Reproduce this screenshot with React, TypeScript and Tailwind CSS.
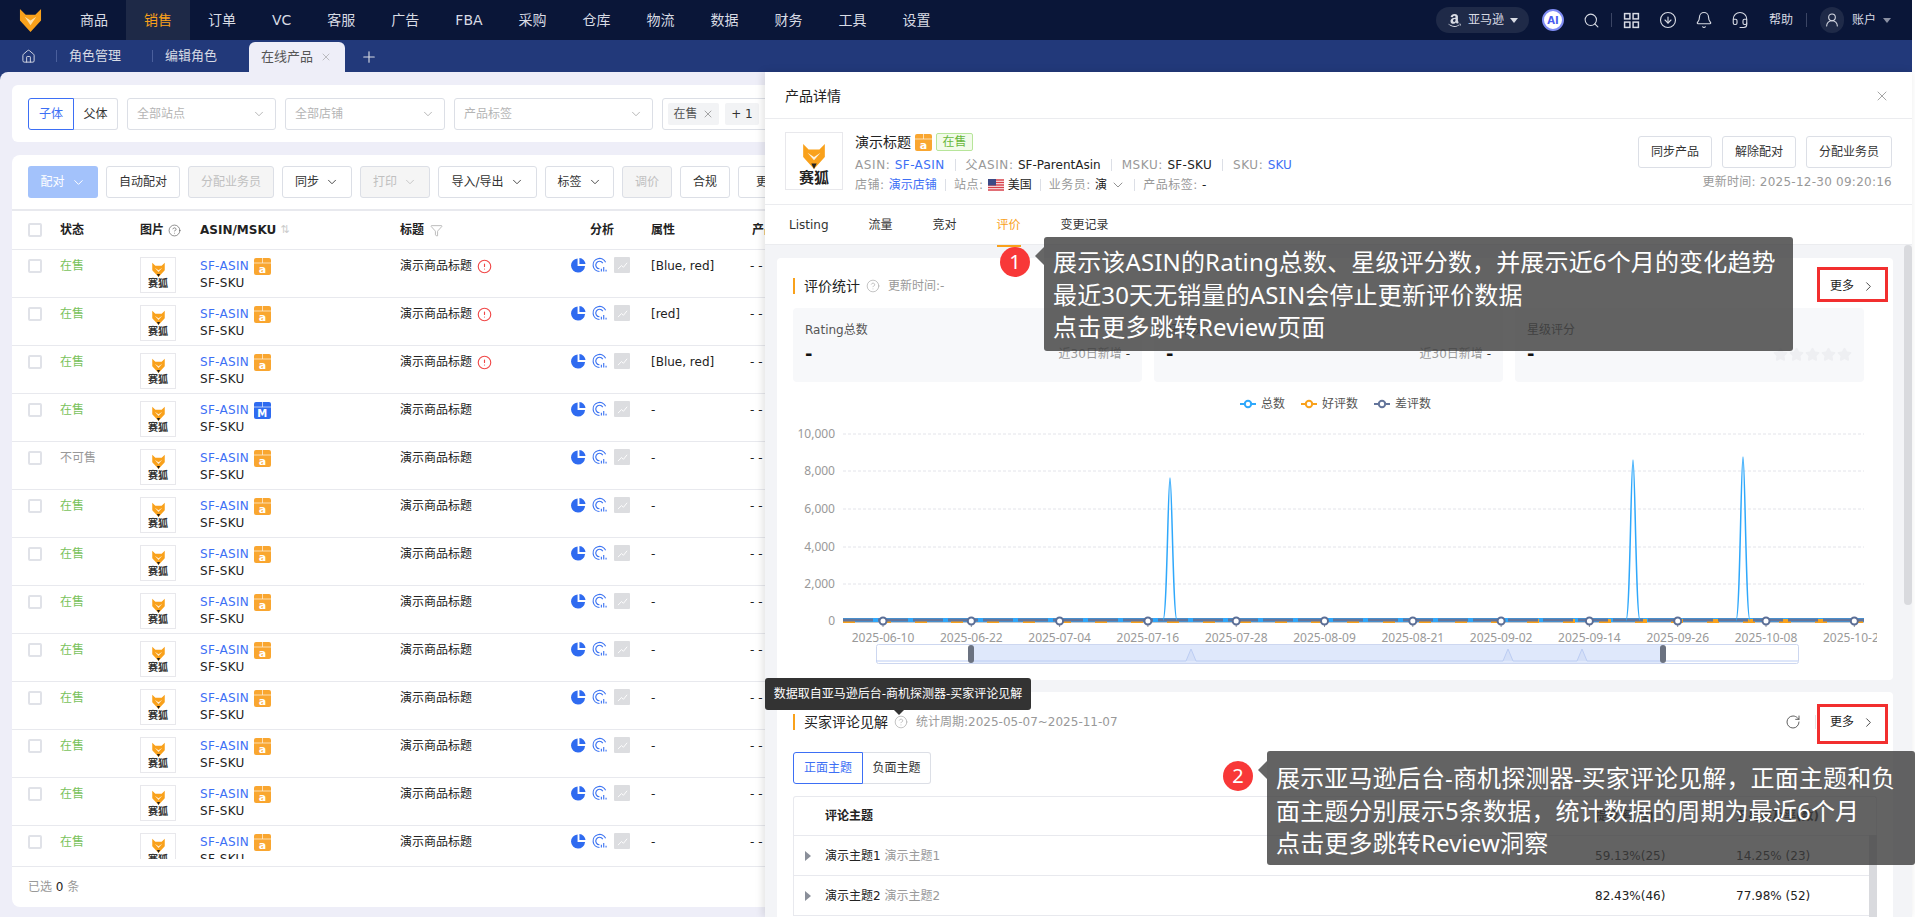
import React from 'react';
import {
  Bell,
  ChevronDown,
  ChevronRight,
  CircleAlert,
  CircleArrowDown,
  CircleHelp,
  Filter,
  Headset,
  House,
  Plus,
  RotateCw,
  Search,
  Star,
  UserRound,
  X,
} from 'lucide-react';
import { FaAmazon } from 'react-icons/fa';

const navItems = ['商品', '销售', '订单', 'VC', '客服', '广告', 'FBA', '采购', '仓库', '物流', '数据', '财务', '工具', '设置'];

const rows = [
  { status: '在售', attr: '[Blue, red]', warn: true, badge: 'a' },
  { status: '在售', attr: '[red]', warn: true, badge: 'a' },
  { status: '在售', attr: '[Blue, red]', warn: true, badge: 'a' },
  { status: '在售', attr: '-', warn: false, badge: 'M' },
  { status: '不可售', attr: '-', warn: false, badge: 'a' },
  ...Array.from({ length: 8 }, () => ({ status: '在售', attr: '-', warn: false, badge: 'a' })),
];

const dates = [
  '2025-06-10', '2025-06-22', '2025-07-04', '2025-07-16', '2025-07-28', '2025-08-09',
  '2025-08-21', '2025-09-02', '2025-09-14', '2025-09-26', '2025-10-08', '2025-10-20',
];

const FoxMark = ({ className }: { className: string }) => (
  <svg viewBox="0 0 24 24" className={className}>
    <path d="M2 1 L7 6 L17 6 L22 1 L22 13 L12 24 L2 13 Z" fill="#f9a11b" />
    <path d="M6 9 L12 13 L18 9 L12 16 Z" fill="#fff" opacity="0.85" />
    <path d="M9.5 19 L14.5 19 L12 24 Z" fill="#222" />
  </svg>
);

const ProductThumb = () => (
  <div className="flex h-[36px] w-[36px] flex-col items-center border border-[#e8e8ec] bg-white pt-[4px]">
    <FoxMark className="h-[15px] w-[17px]" />
    <span className="mt-[1px] text-[10px] leading-[12px] font-bold text-[#333]">赛狐</span>
  </div>
);

// little parcel with the marketplace letter on it
const MarketBadge = ({ type }: { type: string }) => {
  const color = type === 'M' ? '#2f6bf0' : '#f9a630';
  return (
    <svg viewBox="0 0 17 17" className="h-[17px] w-[17px] shrink-0">
      <rect width="17" height="17" rx="2" fill={color} />
      <path d="M0 5 H17 M8.5 0 V5" stroke="#fff" strokeWidth="0.8" opacity="0.8" />
      <text x="8.5" y="14.5" textAnchor="middle" fontSize={type === 'M' ? 10 : 11} fontWeight="700" fill="#fff">
        {type}
      </text>
    </svg>
  );
};

const AnalysisIcons = () => (
  <div className="flex items-start gap-[6px]">
    <svg viewBox="0 0 16 16" className="h-[16px] w-[15px]">
      <path d="M7 1 A7.5 7.5 0 1 0 15 9 L7 9 Z" fill="#2f6bf0" />
      <path d="M9 0.5 A7 7 0 0 1 15.5 7 L9 7 Z" fill="#2f6bf0" />
    </svg>
    <svg viewBox="0 0 16 16" className="h-[16px] w-[15px]" fill="none" stroke="#3d74f2" strokeWidth="1.2">
      <path d="M14.5 5 A7 7 0 1 0 8 15" />
      <path d="M11.5 6 A4 4 0 1 0 8 12" />
      <path d="M10 15 L10 12 M12.5 15 L12.5 10 M15 15 L15 13" />
    </svg>
    <span className="ml-[1px] flex h-[16px] w-[16px] items-center justify-center rounded-[1px] bg-[#dcdde0]">
      <svg viewBox="0 0 12 12" className="h-[11px] w-[11px]" fill="none" stroke="#fff" strokeWidth="1">
        <path d="M1 10 L5 6 L7 8 L11 3" />
      </svg>
    </span>
  </div>
);

const ToolButton = ({ label, w, disabled, caret }: { label: string; w: string; disabled?: boolean; caret?: boolean }) => (
  <button
    className={
      (disabled ? 'bg-[#f5f5f5] text-[#c0c0c0] ' : 'bg-white text-[#333] ') +
      w +
      ' flex h-[32px] shrink-0 items-center justify-center gap-[6px] rounded-[3px] border border-[#dcdfe6] text-[12px]'
    }
  >
    {label}
    {caret && <ChevronDown size={14} strokeWidth={1.5} />}
  </button>
);

const SelectBox = ({ label, w }: { label: string; w: string }) => (
  <div className={w + ' flex h-[32px] shrink-0 items-center justify-between rounded-[3px] border border-[#dcdfe6] bg-white px-[9px] text-[12px] text-[#b5b5b5]'}>
    {label}
    <ChevronDown size={14} strokeWidth={1.2} className="text-[#999]" />
  </div>
);

const Divider = ({ wide }: { wide?: boolean }) => (
  <span className={(wide ? 'mx-[10px] ' : 'mx-[8px] ') + 'h-[12px] w-px bg-[#dcdfe6]'} />
);

const SectionTitle = ({ title }: { title: string }) => (
  <span className="border-l-2 border-[#f9a11b] pl-[9px] text-[14px] leading-[16px] text-[#222]">{title}</span>
);

const MoreLink = () => (
  <span className="flex items-center gap-[7px] text-[12px] text-[#222]">
    更多
    <ChevronRight size={15} strokeWidth={1.3} />
  </span>
);

const StatCard = ({ label, right }: { label: string; right?: boolean }) => (
  <div className="flex h-[74px] flex-col rounded-[4px] bg-[#f7f8fa] px-[12px] pt-[12px]">
    <span className="text-[12px] leading-[20px] text-[#555]">{label}</span>
    <div className="mt-[2px] flex items-center justify-between">
      <span className="text-[18px] leading-[24px] font-bold text-[#111]">-</span>
      {right ? (
        <span className="flex gap-[1px]">
          {[0, 1, 2, 3, 4].map((i) => (
            <Star key={i} size={15} fill="#eeeff2" stroke="#eeeff2" />
          ))}
        </span>
      ) : (
        <span className="text-[12px] text-[#999]">
          近30日新增 <span className="text-[#333]">-</span>
        </span>
      )}
    </div>
  </div>
);

const LegendItem = ({ label, color }: { label: string; color: string }) => (
  <span className="flex items-center gap-[5px] text-[12px] text-[#555]">
    <svg viewBox="0 0 16 10" className="h-[10px] w-[16px]">
      <path d="M0 5 H16" stroke={color} strokeWidth="2" />
      <circle cx="8" cy="5" r="3.2" fill="#fff" stroke={color} strokeWidth="2" />
    </svg>
    {label}
  </span>
);

const ReviewChart = () => {
  const gridLines = [
    { y: 434, label: '10,000' },
    { y: 471, label: '8,000' },
    { y: 509, label: '6,000' },
    { y: 547, label: '4,000' },
    { y: 584, label: '2,000' },
  ];
  return (
    <svg viewBox="777 426 1116 244" className="block h-[244px] w-[1116px] font-['Noto_Sans',sans-serif]">
      <defs>
        <clipPath id="chart-clip">
          <rect x="777" y="426" width="1100" height="244" />
        </clipPath>
      </defs>
      {gridLines.map((g) => (
        <g key={g.y}>
          <line x1="843" x2="1864" y1={g.y} y2={g.y} stroke="#e3e4ea" strokeDasharray="3 2" />
          <text x="835" y={g.y + 4} textAnchor="end" fontSize="12" fill="#999">
            {g.label}
          </text>
        </g>
      ))}
      <text x="835" y="625" textAnchor="end" fontSize="12" fill="#999">
        0
      </text>
      <line x1="843" x2="1864" y1="622" y2="622" stroke="#8a8f99" />
      <g clipPath="url(#chart-clip)">
        {dates.map((d, i) => (
          <g key={d}>
            <line x1={883 + i * 88.3} x2={883 + i * 88.3} y1="622" y2="627" stroke="#8a8f99" />
            <text x={883 + i * 88.3} y="642" textAnchor="middle" fontSize="12" fill="#999">
              {d}
            </text>
          </g>
        ))}
      </g>
      <path d="M843 620 H1864" stroke="#2fa8fb" strokeWidth="4" />
      <path d="M843 621 H1864" stroke="#f9a11b" strokeWidth="4" strokeDasharray="12 24" />
      <path d="M843 620 H1864" stroke="#64759b" strokeWidth="3" strokeDasharray="30 5" />
      <path d="M1163 620 C1167 620 1168 478 1170 478 C1172 478 1173 620 1177 620" fill="none" stroke="#2fa8fb" strokeWidth="1.5" />
      <path d="M1626 620 C1630 620 1631 460 1633 460 C1635 460 1636 620 1640 620" fill="none" stroke="#2fa8fb" strokeWidth="1.5" />
      <path d="M1736 620 C1740 620 1741 457 1743 457 C1745 457 1746 620 1750 620" fill="none" stroke="#2fa8fb" strokeWidth="1.5" />
      {dates.map((d, i) => (
        <circle key={d} cx={883 + i * 88.3} cy="621" r="3.5" fill="#fff" stroke="#5b6e96" strokeWidth="2" />
      ))}
      {/* data zoom */}
      <rect x="876.5" y="644.5" width="922" height="19" rx="2" fill="#fff" stroke="#cdd7f0" />
      <rect x="971" y="645" width="692" height="18" fill="#dfe8fb" />
      <path
        d="M876 661 H1186 L1191 649 L1196 661 H1503 L1508 649 L1513 661 H1577 L1582 649 L1587 661 H1798"
        fill="#d5e0f8"
        stroke="#bccdf3"
      />
      <rect x="968" y="645" width="6" height="18" rx="3" fill="#6b7280" />
      <rect x="1660" y="645" width="6" height="18" rx="3" fill="#6b7280" />
    </svg>
  );
};

const ThemeRow = ({ name, a, b }: { name: string; a: string; b: string }) => (
  <div className="flex h-[40px] items-center border-b border-[#e8e9ee] text-[12px]">
    <span className="mr-[14px] ml-[11px] h-0 w-0 border-y-[5px] border-l-[6px] border-y-transparent border-l-[#8a8f99]" />
    <span className="w-[770px] text-[#222]">
      {name} <span className="text-[#999]">{name}</span>
    </span>
    <span className="w-[141px] text-[#222]">{a}</span>
    <span className="text-[#222]">{b}</span>
  </div>
);

const Callout = ({ n, className, badgeOffset, children }: { n: string; className: string; badgeOffset: string; children: React.ReactNode }) => (
  <div className={"absolute rounded-[3px] bg-[#3c3c3c]/80 px-[9px] font-['Noto_Sans','Noto_Sans_CJK_SC',sans-serif] text-[24px] leading-[32.5px] tracking-[0.15px] whitespace-nowrap text-white " + className}>
    <span className={'absolute -left-[44px] flex h-[30px] w-[30px] items-center justify-center rounded-full bg-[#f83838] text-[20px] ' + badgeOffset}>
      {n}
    </span>
    <span className={'absolute -left-[9px] h-0 w-0 border-y-[9px] border-r-[9px] border-y-transparent border-r-[#666] ' + badgeOffset} />
    {children}
  </div>
);

const TableRow = ({ row }: { row: (typeof rows)[number] }) => (
  <div className="flex h-[48px] shrink-0 items-start border-b border-[#e8e9ee] pt-[7px] pl-[16px] text-[12px] leading-[17px] text-[#222]">
    <span className="mt-[2px] mr-[18px] h-[14px] w-[14px] shrink-0 rounded-[2px] border-2 border-[#e0e2e8] bg-white" />
    <span className={(row.status === '在售' ? 'text-[#7ac25c] ' : 'text-[#999] ') + 'mt-[1px] w-[80px] shrink-0'}>{row.status}</span>
    <span className="w-[60px] shrink-0">
      <ProductThumb />
    </span>
    <div className="mt-[1px] w-[200px] shrink-0 tracking-[0.3px]">
      <div className="flex items-center gap-[5px] text-[#3d6ff5]">
        SF-ASIN
        <MarketBadge type={row.badge} />
      </div>
      <div>SF-SKU</div>
    </div>
    <div className="mt-[1px] flex w-[171px] shrink-0 items-center gap-[5px]">
      演示商品标题
      {row.warn && <CircleAlert size={15} strokeWidth={1.8} className="text-[#f04848]" />}
    </div>
    <span className="w-[80px] shrink-0">
      <AnalysisIcons />
    </span>
    <span className="mt-[1px] w-[99px] shrink-0">{row.attr}</span>
    <span className="mt-[1px]">- -</span>
  </div>
);

const ProductDrawer = () => (
  <div className="absolute top-[72px] bottom-0 left-[765px] flex w-[1147px] flex-col overflow-hidden bg-white shadow-[-2px_0_8px_rgba(0,0,0,0.12)]">
    <div className="flex h-[47px] shrink-0 items-center justify-between border-b border-[#ebecef] pt-[2px] pr-[22px] pl-[20px] text-[14px] text-[#222]">
      产品详情
      <X size={16} strokeWidth={1} className="text-[#777]" />
    </div>

    {/* Product info */}
    <div className="flex h-[86px] shrink-0 border-b border-[#ebecef] pt-[13px] pr-[20px] pl-[20px]">
      <div className="flex h-[58px] w-[58px] shrink-0 flex-col items-center border border-[#e8e8ec] pt-[10px]">
        <FoxMark className="h-[26px] w-[28px]" />
        <span className="text-[15px] leading-[18px] font-bold text-[#222]">赛狐</span>
      </div>
      <div className="ml-[12px] flex-1 text-[12px] text-[#999]">
        <div className="flex h-[20px] items-center gap-[4px] text-[14px] text-[#222]">
          演示标题
          <MarketBadge type="a" />
          <span className="flex h-[18px] w-[37px] items-center justify-center rounded-[2px] border border-[#b7e59a] bg-[#f2fbea] text-[12px] text-[#68b83c]">在售</span>
        </div>
        <div className="mt-[3px] flex h-[20px] items-center tracking-[0.6px]">
          ASIN:&nbsp;<span className="tracking-[0.4px] text-[#3d6ff5]">SF-ASIN</span>
          <Divider wide />
          父ASIN:&nbsp;<span className="tracking-normal text-[#222]">SF-ParentAsin</span>
          <Divider wide />
          MSKU:&nbsp;<span className="tracking-[0.3px] text-[#222]">SF-SKU</span>
          <Divider wide />
          SKU:&nbsp;<span className="tracking-normal text-[#3d6ff5]">SKU</span>
        </div>
        <div className="flex h-[20px] items-center tracking-[0.5px]">
          店铺:&nbsp;<span className="tracking-normal text-[#3d6ff5]">演示店铺</span>
          <Divider />
          站点:&nbsp;
          <svg viewBox="0 0 16 12" className="mr-[4px] h-[12px] w-[16px]">
            <rect width="16" height="12" fill="#fff" />
            <path d="M0 1 H16 M0 3.5 H16 M0 6 H16 M0 8.5 H16 M0 11 H16" stroke="#d8404a" strokeWidth="1.3" />
            <rect width="8" height="6.5" fill="#3c4a86" />
          </svg>
          <span className="tracking-normal text-[#222]">美国</span>
          <Divider />
          业务员:&nbsp;<span className="tracking-normal text-[#222]">演</span>
          <ChevronDown size={16} strokeWidth={1.2} className="ml-[3px] text-[#777]" />
          <Divider />
          产品标签:&nbsp;<span className="tracking-normal text-[#222]">-</span>
        </div>
      </div>
      <div className="flex flex-col items-end">
        <div className="mt-[4px] flex gap-[10px]">
          <ToolButton label="同步产品" w="w-[74px]" />
          <ToolButton label="解除配对" w="w-[74px]" />
          <ToolButton label="分配业务员" w="w-[86px]" />
        </div>
        <span className="mt-[5px] text-[12px] leading-[18px] tracking-[0.25px] text-[#999]">更新时间: 2025-12-30 09:20:16</span>
      </div>
    </div>

    {/* Tabs */}
    <div className="flex h-[40px] shrink-0 items-center gap-[40px] border-b border-[#ebecef] pl-[24px] text-[12px] text-[#333]">
      <span>Listing</span>
      <span>流量</span>
      <span>竞对</span>
      <span className="relative text-[#f9a11b]">
        评价
        <span className="absolute top-[29px] left-0 h-[2px] w-full bg-[#f9a11b]" />
      </span>
      <span>变更记录</span>
    </div>

    <div className="flex flex-1 flex-col gap-[12px] overflow-hidden bg-[#f3f4f7] pt-[13px] pr-[19px] pl-[12px]">
      {/* Rating stats */}
      <div className="shrink-0 rounded-[4px] bg-white pl-[16px]">
        <div className="flex h-[50px] items-center justify-between pt-[6px] pr-[17px]">
          <div className="flex items-center gap-[6px]">
            <SectionTitle title="评价统计" />
            <CircleHelp size={14} strokeWidth={1.2} className="text-[#aaa]" />
            <span className="ml-[2px] text-[12px] text-[#999]">更新时间:-</span>
          </div>
          <MoreLink />
        </div>
        <div className="grid w-[1071px] grid-cols-3 gap-[12px]">
          <StatCard label="Rating总数" />
          <StatCard label="好评数" />
          <StatCard label="星级评分" right />
        </div>
        <div className="flex h-[44px] w-[1071px] items-center justify-center gap-[16px] pl-[14px]">
          <LegendItem label="总数" color="#2fa8fb" />
          <LegendItem label="好评数" color="#f9a11b" />
          <LegendItem label="差评数" color="#64759b" />
        </div>
        <div className="-ml-[16px] pb-[10px]">
          <ReviewChart />
        </div>
      </div>

      {/* Buyer review insights */}
      <div className="flex-1 rounded-t-[4px] bg-white pl-[16px]">
        <div className="flex h-[60px] items-center justify-between pr-[17px]">
          <div className="flex items-center gap-[6px]">
            <SectionTitle title="买家评论见解" />
            <CircleHelp size={14} strokeWidth={1.2} className="text-[#aaa]" />
            <span className="ml-[2px] text-[12px] text-[#999]">统计周期:2025-05-07~2025-11-07</span>
          </div>
          <div className="flex items-center gap-[14px]">
            <RotateCw size={16} strokeWidth={1.4} className="text-[#555]" />
            <span className="h-[14px] w-px bg-[#e5e5e5]" />
            <MoreLink />
          </div>
        </div>
        <div className="flex text-[12px]">
          <span className="flex h-[32px] w-[70px] items-center justify-center rounded-l-[3px] border border-[#3d6ff5] text-[#3d6ff5]">正面主题</span>
          <span className="flex h-[32px] w-[68px] items-center justify-center rounded-r-[3px] border border-l-0 border-[#dcdfe6] text-[#333]">负面主题</span>
        </div>
        <div className="mt-[12px] w-[1084px] rounded-t-[3px] border-x border-t border-[#e8e9ee]">
          <div className="flex h-[39px] items-center border-b border-[#e8e9ee] pl-[31px] text-[12px] font-bold text-[#222]">
            <span className="w-[770px]">评论主题</span>
            <span className="w-[141px]">提及率(数)</span>
            <span>五星提及率(数)</span>
          </div>
          <ThemeRow name="演示主题1" a="59.13%(25)" b="14.25% (23)" />
          <ThemeRow name="演示主题2" a="82.43%(46)" b="77.98% (52)" />
        </div>
      </div>
    </div>

    {/* Drawer scrollbar */}
    <span className="absolute top-[173px] right-0 h-[360px] w-[8px] rounded-[4px] bg-[#d9dade]" />
    <span className="absolute top-[763px] right-[35px] h-[82px] w-[8px] bg-[#d9dade]" />
  </div>
);

export default function App() {
  return (
    <div className="relative h-[917px] w-[1915px] overflow-hidden bg-white font-['DejaVu_Sans','Noto_Sans_CJK_SC',sans-serif]">
      {/* Top nav */}
      <div className="flex h-[40px] w-[1912px] items-center bg-[#0a1638] text-[14px] text-[#d8dbe4]">
        <div className="flex w-[62px] justify-center">
          <svg viewBox="0 0 24 24" className="-ml-[2px] h-[23px] w-[23px]">
            <path d="M1 0 L7 6 L17 6 L23 0 L23 12 L12 24 L1 12 Z" fill="#f9a11b" />
            <path d="M6 8 L12 12 L18 8 L12 17 Z" fill="#fde0a8" />
          </svg>
        </div>
        {navItems.map((item) => (
          <span
            key={item}
            className={
              item === '销售'
                ? 'flex h-[40px] items-center bg-[#1e2947] px-[18px] text-[#f9a11b]'
                : 'flex h-[40px] items-center px-[18px]'
            }
          >
            {item}
          </span>
        ))}
        <div className="ml-auto flex items-center text-[12px]">
          <span className="flex h-[26px] w-[93px] items-center justify-center gap-[6px] rounded-[13px] bg-[#1f2a48]">
            <FaAmazon size={15} />
            亚马逊
            <span className="h-0 w-0 border-x-[4px] border-t-[5px] border-x-transparent border-t-[#d8dbe4]" />
          </span>
          <span className="ml-[13px] flex h-[22px] w-[22px] items-center justify-center rounded-full border-2 border-[#7f8cf5] bg-white text-[10px] font-bold text-[#4a5cf0]">AI</span>
          <Search size={17} strokeWidth={1.5} className="ml-[19px]" />
          <span className="mx-[11px] h-[14px] w-px bg-[#3b4564]" />
          <svg viewBox="0 0 16 16" className="h-[17px] w-[17px]" fill="none" stroke="currentColor" strokeWidth="1.4">
            <rect x="1.5" y="1.5" width="5" height="5" />
            <rect x="9.5" y="1.5" width="5" height="5" />
            <rect x="1.5" y="9.5" width="5" height="5" />
            <rect x="9.5" y="9.5" width="5" height="5" />
          </svg>
          <CircleArrowDown size={18} strokeWidth={1.5} className="ml-[19px]" />
          <Bell size={18} strokeWidth={1.5} className="ml-[18px]" />
          <Headset size={18} strokeWidth={1.5} className="ml-[18px]" />
          <span className="ml-[20px]">帮助</span>
          <span className="mx-[13px] h-[14px] w-px bg-[#3b4564]" />
          <span className="flex h-[26px] w-[24px] items-center justify-center rounded-[12px] bg-[#1f2a48]">
            <UserRound size={16} strokeWidth={1.6} />
          </span>
          <span className="ml-[8px]">账户</span>
          <span className="mr-[21px] ml-[7px] h-0 w-0 border-x-[4px] border-t-[5px] border-x-transparent border-t-[#8a90a3]" />
        </div>
      </div>

      {/* Tab strip */}
      <div className="flex h-[32px] w-[1912px] items-end bg-[#22397a] text-[13px] text-[#d8dbe4]">
        <div className="flex h-[32px] items-center">
          <House size={15} strokeWidth={1.5} className="ml-[21px]" />
          <span className="ml-[20px] h-[12px] w-px bg-[#4a5f9c]" />
          <span className="ml-[12px]">角色管理</span>
          <span className="ml-[31px] h-[12px] w-px bg-[#4a5f9c]" />
          <span className="ml-[12px]">编辑角色</span>
        </div>
        <div className="ml-[32px] flex h-[30px] w-[96px] items-center rounded-t-[6px] bg-[#eeeef8] pl-[12px] text-[#555]">
          在线产品
          <X size={12} strokeWidth={1} className="ml-[7px] text-[#888]" />
        </div>
        <Plus size={18} strokeWidth={1.5} className="mb-[6px] ml-[15px]" />
      </div>

      {/* Page content */}
      <div className="w-[1912px] bg-[#22397a]">
        <div className="flex h-[845px] flex-col gap-[13px] rounded-tl-[8px] bg-[#eeeef8] pt-[13px] pl-[12px]">
          <div className="flex h-[57px] shrink-0 items-center gap-[9px] rounded-l-[6px] bg-white pl-[16px] text-[12px]">
            <div className="flex">
              <span className="flex h-[32px] w-[46px] items-center justify-center rounded-l-[3px] border border-[#3d6ff5] text-[#3d6ff5]">子体</span>
              <span className="flex h-[32px] w-[44px] items-center justify-center rounded-r-[3px] border border-l-0 border-[#dcdfe6] text-[#333]">父体</span>
            </div>
            <SelectBox label="全部站点" w="w-[149px]" />
            <SelectBox label="全部店铺" w="w-[160px]" />
            <SelectBox label="产品标签" w="w-[199px]" />
            <div className="flex h-[32px] w-[120px] shrink-0 items-center gap-[6px] rounded-[3px] border border-[#dcdfe6] pl-[5px] text-[#555]">
              <span className="flex h-[22px] w-[51px] items-center justify-center gap-[4px] rounded-[2px] bg-[#f2f3f5]">
                在售
                <X size={12} strokeWidth={1} />
              </span>
              <span className="flex h-[22px] w-[34px] items-center justify-center rounded-[2px] bg-[#f2f3f5] text-[#333]">+ 1</span>
            </div>
          </div>

          <div className="flex h-[752px] shrink-0 flex-col rounded-l-[8px] bg-white">
            <div className="flex h-[56px] shrink-0 items-center gap-[8px] border-b-2 border-[#e8e9ee] pl-[16px]">
              <button className="flex h-[32px] w-[70px] shrink-0 items-center justify-center gap-[6px] rounded-[3px] bg-[#a3c2fb] text-[12px] text-white">
                配对
                <ChevronDown size={15} strokeWidth={1.6} />
              </button>
              <ToolButton label="自动配对" w="w-[74px]" />
              <ToolButton label="分配业务员" w="w-[86px]" disabled />
              <ToolButton label="同步" w="w-[70px]" caret />
              <ToolButton label="打印" w="w-[70px]" disabled caret />
              <ToolButton label="导入/导出" w="w-[99px]" caret />
              <ToolButton label="标签" w="w-[69px]" caret />
              <ToolButton label="调价" w="w-[50px]" disabled />
              <ToolButton label="合规" w="w-[50px]" />
              <ToolButton label="更多" w="w-[60px]" />
            </div>
            <div className="flex h-[39px] shrink-0 items-center border-b border-[#e8e9ee] pl-[16px] text-[12px] font-bold text-[#222]">
              <span className="mr-[18px] h-[14px] w-[14px] shrink-0 rounded-[2px] border-2 border-[#e0e2e8]" />
              <span className="w-[80px] shrink-0">状态</span>
              <span className="flex w-[60px] shrink-0 items-center gap-[4px]">
                图片
                <CircleHelp size={13} strokeWidth={1.2} className="text-[#555]" />
              </span>
              <span className="flex w-[200px] shrink-0 items-center gap-[4px]">
                ASIN/MSKU
                <span className="text-[11px] font-normal text-[#ccc]">⇅</span>
              </span>
              <span className="flex w-[190px] shrink-0 items-center gap-[6px]">
                标题
                <Filter size={13} strokeWidth={1.2} className="text-[#999]" />
              </span>
              <span className="w-[61px] shrink-0">分析</span>
              <span className="w-[101px] shrink-0">属性</span>
              <span>产品</span>
            </div>
            <div className="flex h-[609px] shrink-0 flex-col overflow-hidden">
              {rows.map((row, i) => (
                <TableRow key={i} row={row} />
              ))}
            </div>
            <div className="mt-[7px] flex flex-1 items-center border-t border-[#e8e9ee] pl-[16px] text-[12px] text-[#999]">
              已选&nbsp;<span className="text-[#222]">0</span>&nbsp;条
            </div>
          </div>
        </div>
      </div>

      <ProductDrawer />

      {/* Annotations */}
      <Callout n="1" className="top-[237px] left-[1044px] h-[114px] w-[749px] pt-[9px]" badgeOffset="top-[10px]">
        展示该ASIN的Rating总数、星级评分数，并展示近6个月的变化趋势
        <br />
        最近30天无销量的ASIN会停止更新评价数据
        <br />
        点击更多跳转Review页面
      </Callout>
      <Callout n="2" className="top-[751px] left-[1267px] h-[114px] w-[648px] pt-[11px]" badgeOffset="top-[10px]">
        展示亚马逊后台-商机探测器-买家评论见解，正面主题和负
        <br />
        面主题分别展示5条数据，统计数据的周期为最近6个月
        <br />
        点击更多跳转Review洞察
      </Callout>
      <span className="absolute top-[267px] left-[1817px] h-[35px] w-[71px] border-[3px] border-[#f22f2f]" />
      <span className="absolute top-[704px] left-[1817px] h-[40px] w-[71px] border-[3px] border-[#f22f2f]" />

      {/* Help tooltip */}
      <div className="absolute top-[678px] left-[765px] flex h-[32px] w-[266px] items-center justify-center rounded-[3px] bg-[#333] text-[12px] whitespace-nowrap text-white">
        数据取自亚马逊后台-商机探测器-买家评论见解
        <span className="absolute top-[32px] left-[129px] h-0 w-0 border-x-[5px] border-t-[5px] border-x-transparent border-t-[#333]" />
      </div>
    </div>
  );
}
